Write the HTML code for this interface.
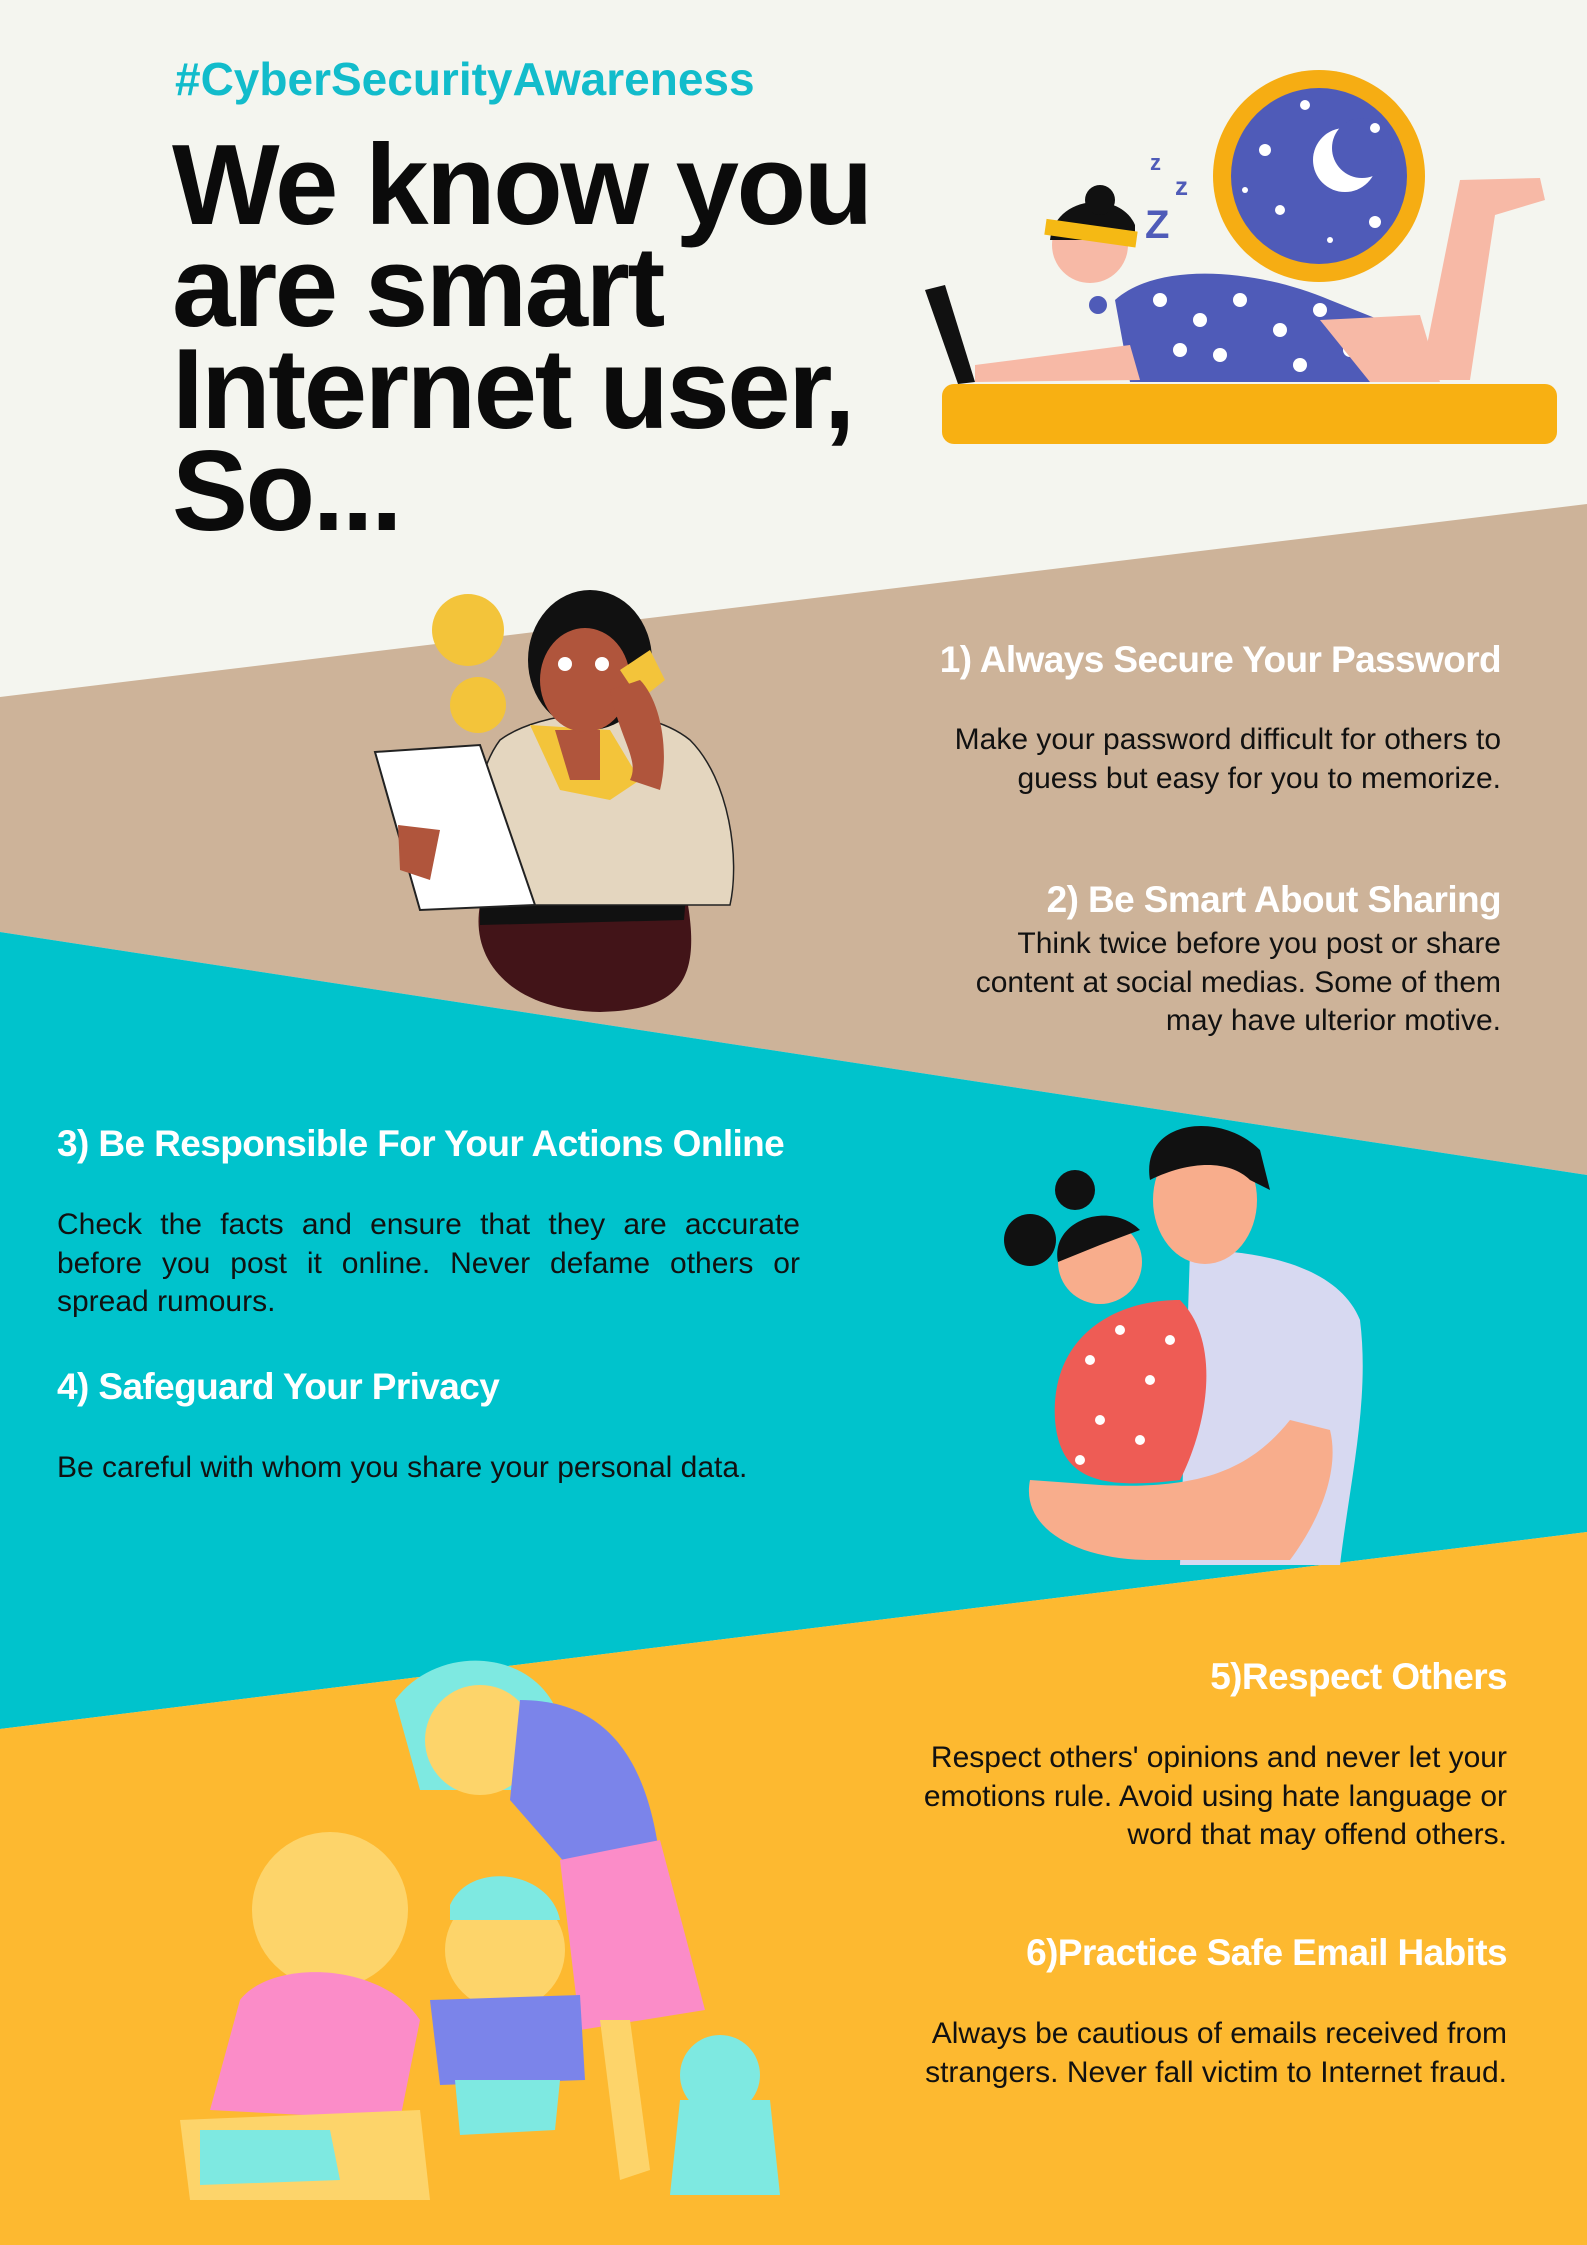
<!DOCTYPE html>
<html><head><meta charset="utf-8"><style>
*{margin:0;padding:0;box-sizing:border-box}
body{width:1587px;height:2245px;position:relative;overflow:hidden;background:#f4f5ef;font-family:"Liberation Sans",sans-serif}
svg.bg{position:absolute;left:0;top:0}
.t{position:absolute;white-space:nowrap}
.tag{left:175px;top:52px;font-size:46px;font-weight:bold;color:#12bccb;letter-spacing:0px}
.h{left:172px;top:135px;font-size:114px;font-weight:bold;color:#0b0b0b;line-height:102px;letter-spacing:-2.5px}
.hd{font-size:37px;font-weight:bold;color:#fff;letter-spacing:-0.6px}
.bd{font-size:30px;color:#111;line-height:38.5px}
.r{text-align:right}
</style></head><body>
<svg class="bg" width="1587" height="2245" viewBox="0 0 1587 2245">
<polygon points="0,697 1587,504 1587,1175 0,932" fill="#cdb399"/>
<polygon points="0,932 1587,1175 1587,1532 0,1729" fill="#00c3cc"/>
<polygon points="0,1729 1587,1532 1587,2245 0,2245" fill="#fdb930"/>
<circle cx="1319" cy="176" r="106" fill="#f6ad13"/>
<circle cx="1319" cy="176" r="88" fill="#4f5bb8"/>
<circle cx="1345" cy="160" r="32" fill="#fff"/><circle cx="1362" cy="148" r="30" fill="#4f5bb8"/>
<g fill="#fff"><circle cx="1265" cy="150" r="6"/><circle cx="1305" cy="105" r="5"/><circle cx="1375" cy="128" r="5"/><circle cx="1280" cy="210" r="5"/><circle cx="1375" cy="222" r="6"/><circle cx="1330" cy="240" r="3"/><circle cx="1245" cy="190" r="3"/></g>
<text x="1150" y="170" font-family="Liberation Sans" font-weight="bold" font-size="22" fill="#4f5bb8">z</text>
<text x="1175" y="195" font-family="Liberation Sans" font-weight="bold" font-size="26" fill="#4f5bb8">z</text>
<text x="1145" y="238" font-family="Liberation Sans" font-weight="bold" font-size="40" fill="#4f5bb8">Z</text>
<rect x="942" y="384" width="615" height="60" rx="12" fill="#f8b012"/>
<path d="M1420,380 L1460,180 L1540,178 L1545,200 L1495,215 L1470,380 Z" fill="#f7b9a6"/>
<path d="M1115,300 C1160,260 1260,270 1330,300 L1380,320 L1378,382 L1130,382 Z" fill="#4f5bb8"/>
<g fill="#fff"><circle cx="1160" cy="300" r="7"/><circle cx="1200" cy="320" r="7"/><circle cx="1240" cy="300" r="7"/><circle cx="1280" cy="330" r="7"/><circle cx="1320" cy="310" r="7"/><circle cx="1350" cy="350" r="7"/><circle cx="1220" cy="355" r="7"/><circle cx="1300" cy="365" r="7"/><circle cx="1180" cy="350" r="7"/></g>
<path d="M1320,320 L1420,315 L1440,382 L1370,382 Z" fill="#f7b9a6"/>
<path d="M925,290 L945,285 L975,382 L958,384 Z" fill="#111"/>
<path d="M975,365 L1130,345 L1140,380 L975,382 Z" fill="#f7b9a6"/>
<circle cx="1090" cy="245" r="38" fill="#f7b9a6"/>
<path d="M1050,240 C1055,195 1120,190 1135,225 L1135,240 Z" fill="#111"/>
<circle cx="1100" cy="200" r="15" fill="#111"/>
<rect x="1045" y="225" width="92" height="16" fill="#f5b914" transform="rotate(8 1090 233)"/>
<circle cx="1098" cy="305" r="9" fill="#4f5bb8"/>
<circle cx="468" cy="630" r="36" fill="#f3c43a"/><circle cx="478" cy="705" r="28" fill="#f3c43a"/>
<path d="M480,905 C470,960 510,1010 600,1012 C680,1010 700,980 688,905 Z" fill="#421418"/>
<path d="M480,900 L686,895 L684,920 L480,925 Z" fill="#111"/>
<path d="M500,740 C540,710 640,700 690,740 C730,780 740,860 730,905 L480,905 C470,860 470,780 500,740 Z" fill="#e4d6bf" stroke="#222" stroke-width="1.5"/>
<path d="M530,725 L610,730 L640,780 L610,800 L560,790 Z" fill="#f3c43a"/>
<path d="M555,730 L600,730 L600,780 L570,780 Z" fill="#b0553c"/>
<ellipse cx="590" cy="660" rx="62" ry="70" fill="#111"/>
<ellipse cx="585" cy="680" rx="45" ry="52" fill="#b0553c"/>
<circle cx="565" cy="664" r="7" fill="#fff"/><circle cx="602" cy="664" r="7" fill="#fff"/>
<path d="M620,670 L650,650 L665,680 L640,700 Z" fill="#f3c43a"/>
<path d="M610,690 C620,740 640,760 630,780 L660,790 C670,750 660,700 640,680 Z" fill="#b0553c"/>
<path d="M375,752 L480,745 L535,905 L420,910 Z" fill="#fff" stroke="#222" stroke-width="2"/>
<path d="M398,825 L440,830 L430,880 L400,870 Z" fill="#b0553c"/>
<path d="M1190,1250 C1270,1250 1340,1270 1360,1320 C1370,1400 1350,1480 1340,1565 L1180,1565 Z" fill="#d7d9f1"/>
<path d="M1030,1480 C1020,1530 1080,1560 1150,1560 L1290,1560 C1320,1520 1340,1470 1330,1430 L1290,1420 C1250,1470 1200,1490 1100,1485 Z" fill="#f8ad8c"/>
<ellipse cx="1205" cy="1200" rx="52" ry="64" fill="#f8ad8c"/>
<path d="M1150,1180 C1140,1120 1220,1110 1260,1150 L1270,1190 L1250,1180 C1230,1160 1190,1160 1150,1180 Z" fill="#111"/>
<path d="M1180,1300 C1110,1300 1050,1340 1055,1420 C1060,1480 1100,1490 1180,1480 C1210,1420 1220,1340 1180,1300 Z" fill="#ee5c55"/>
<g fill="#fff"><circle cx="1090" cy="1360" r="5"/><circle cx="1120" cy="1330" r="5"/><circle cx="1150" cy="1380" r="5"/><circle cx="1100" cy="1420" r="5"/><circle cx="1140" cy="1440" r="5"/><circle cx="1170" cy="1340" r="5"/><circle cx="1080" cy="1460" r="5"/></g>
<circle cx="1100" cy="1262" r="42" fill="#f8ad8c"/>
<path d="M1058,1262 C1050,1220 1110,1200 1140,1230 L1100,1245 Z" fill="#111"/>
<circle cx="1030" cy="1240" r="26" fill="#111"/><circle cx="1075" cy="1190" r="20" fill="#111"/>
<path d="M395,1700 C440,1640 540,1650 560,1720 L540,1790 L420,1790 Z" fill="#7ee9e1"/>
<circle cx="480" cy="1740" r="55" fill="#fdd46a"/>
<path d="M520,1700 C620,1700 650,1780 660,1860 L580,1880 L510,1800 Z" fill="#7b84ea"/>
<path d="M560,1860 L660,1840 L705,2010 L580,2030 Z" fill="#fb8cc8"/>
<path d="M600,2020 L630,2020 L650,2170 L620,2180 Z" fill="#fdd46a"/>
<circle cx="330" cy="1910" r="78" fill="#fdd46a"/>
<path d="M240,2000 C270,1960 380,1960 420,2020 L400,2120 L210,2110 Z" fill="#fb8cc8"/>
<path d="M180,2120 L420,2110 L430,2200 L190,2200 Z" fill="#fdd46a"/>
<path d="M200,2130 L330,2130 L340,2180 L200,2185 Z" fill="#7ee9e1"/>
<circle cx="505" cy="1950" r="60" fill="#fdd46a"/>
<path d="M450,1905 C470,1860 550,1870 560,1920 L450,1920 Z" fill="#7ee9e1"/>
<path d="M430,2000 L580,1995 L585,2080 L440,2085 Z" fill="#7b84ea"/>
<path d="M455,2080 L560,2080 L555,2130 L460,2135 Z" fill="#7ee9e1"/>
<circle cx="720" cy="2075" r="40" fill="#7ee9e1"/>
<path d="M680,2100 L770,2100 L780,2195 L670,2195 Z" fill="#7ee9e1"/>
</svg>

<div class="t tag">#CyberSecurityAwareness</div>
<div class="t h">We know you<br>are smart<br>Internet user,<br>So...</div>

<div class="t hd r" style="right:86px;top:639px">1) Always Secure Your Password</div>
<div class="t bd r" style="right:86px;top:721px">Make your password difficult for others to<br>guess but easy for you to memorize.</div>
<div class="t hd r" style="right:86px;top:879px">2) Be Smart About Sharing</div>
<div class="t bd r" style="right:86px;top:925px">Think twice before you post or share<br>content at social medias. Some of them<br>may have ulterior motive.</div>

<div class="t hd" style="left:57px;top:1123px">3) Be Responsible For Your Actions Online</div>
<div class="bd" style="position:absolute;left:57px;top:1206px;width:743px;text-align:justify">Check the facts and ensure that they are accurate before you post it online. Never defame others or spread rumours.</div>
<div class="t hd" style="left:57px;top:1366px">4) Safeguard Your Privacy</div>
<div class="t bd" style="left:57px;top:1449px">Be careful with whom you share your personal data.</div>

<div class="t hd r" style="right:80px;top:1656px">5)Respect Others</div>
<div class="t bd r" style="right:80px;top:1739px">Respect others' opinions and never let your<br>emotions rule. Avoid using hate language or<br>word that may offend others.</div>
<div class="t hd r" style="right:80px;top:1932px">6)Practice Safe Email Habits</div>
<div class="t bd r" style="right:80px;top:2015px">Always be cautious of emails received from<br>strangers. Never fall victim to Internet fraud.</div>
</body></html>
